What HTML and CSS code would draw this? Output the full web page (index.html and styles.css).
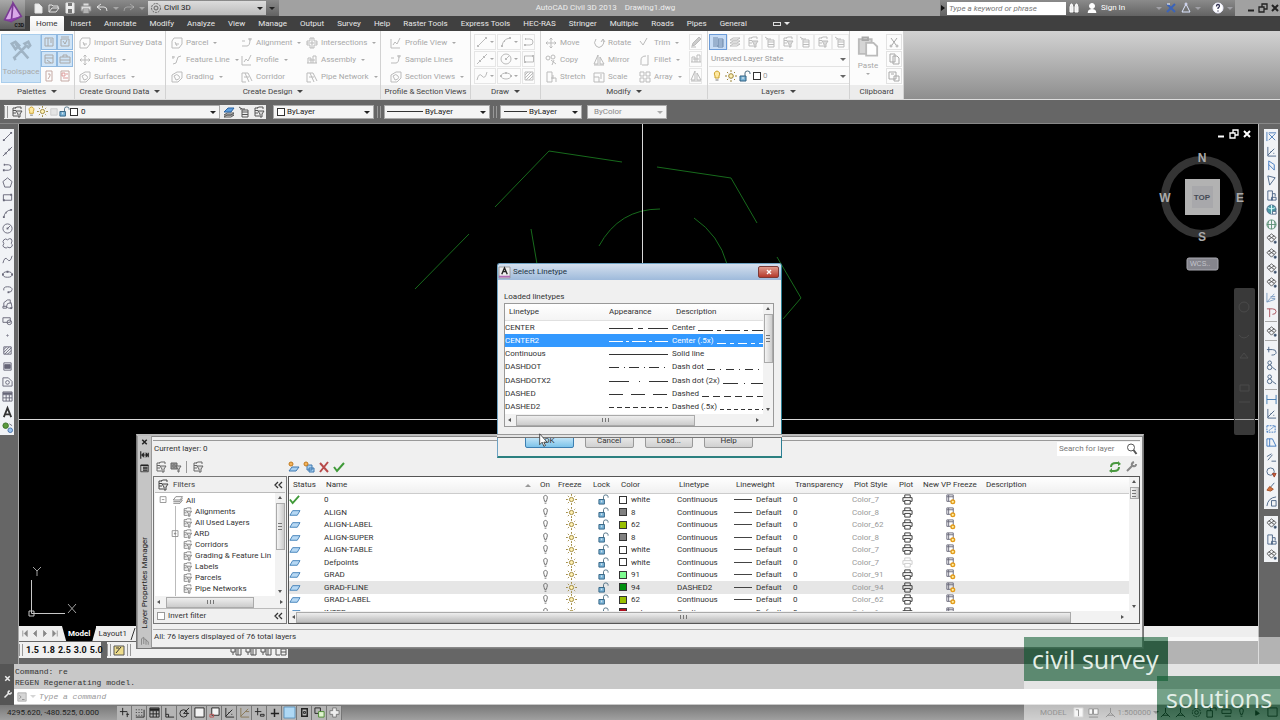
FILE: index.html
```html
<!DOCTYPE html>
<html lang="en">
<head>
<meta charset="utf-8">
<title>AutoCAD Civil 3D 2013 - Drawing1.dwg</title>
<link rel="stylesheet" href="styles.css">
</head>
<body>
<div class="app">
  <header class="titlebar">
    <div class="quick">
      <div class="quick-tools" data-tools="new open save print undo"></div>
      <i class="caret dim"></i><button class="tool redo" aria-label="redo"><i data-icon="redo"></i></button><i class="caret dim"></i>
      <label class="combo workspace-combo"><i data-icon="gear"></i><select aria-label="Workspace"><option>Civil 3D</option></select></label>
      <i class="caret"></i>
    </div>
    <div class="doc-title"><span>AutoCAD Civil 3D 2013</span><span>Drawing1.dwg</span></div>
    <div class="info">
      <i class="play"></i>
      <input class="keyword" type="text" aria-label="Search help" placeholder="Type a keyword or phrase">
      <button class="tool" aria-label="find"><i data-icon="binoc"></i></button>
      <button class="signin"><i data-icon="person"></i>Sign In</button>
      <div class="info-tools"><i class="caret dim"></i><button class="tool" aria-label="exchange"><i data-icon="exchange"></i></button><button class="tool" aria-label="connect"><i data-icon="tri"></i></button><i class="caret dim"></i><button class="tool help" aria-label="help"><i data-icon="help"></i></button><i class="caret dim"></i></div>
    </div>
    <div class="win-tools" data-tools="min restore close"></div>
  </header>
  <button class="app-menu" aria-label="Application menu"><i data-icon="logo"></i><span>C3D</span></button>

  <nav class="tabs">
    <button class="tab on">Home</button><button class="tab">Insert</button><button class="tab">Annotate</button><button class="tab">Modify</button><button class="tab">Analyze</button><button class="tab">View</button><button class="tab">Manage</button><button class="tab">Output</button><button class="tab">Survey</button><button class="tab">Help</button><button class="tab">Raster Tools</button><button class="tab">Express Tools</button><button class="tab">HEC-RAS</button><button class="tab">Stringer</button><button class="tab">Multiple</button><button class="tab">Roads</button><button class="tab">Pipes</button><button class="tab">General</button>
    <button class="tab ribbon-toggle" aria-label="Ribbon display"><i class="pill"></i><i class="caret"></i></button>
  </nav>

  <section class="ribbon">
    <div class="panel p-palettes">
      <div class="body">
        <button class="toolspace"><i data-icon="tools"></i><span>Toolspace</span></button>
        <div class="grid2 blue" data-tools="panel panel2 panel3 case doc book"></div>
      </div>
      <h2>Palettes <i class="caret"></i></h2>
    </div>
    <div class="panel p-ground">
      <div class="body cmds">
        <button class="cmd"><i data-icon="survey"></i>Import Survey Data</button>
        <button class="cmd"><i data-icon="move"></i>Points <i class="caret"></i></button>
        <button class="cmd"><i data-icon="surface"></i>Surfaces <i class="caret"></i></button>
      </div>
      <h2>Create Ground Data <i class="caret"></i></h2>
    </div>
    <div class="panel p-design">
      <div class="body cmds">
        <button class="cmd"><i data-icon="survey"></i>Parcel <i class="caret"></i></button>
        <button class="cmd"><i data-icon="feature"></i>Feature Line <i class="caret"></i></button>
        <button class="cmd"><i data-icon="surface"></i>Grading <i class="caret"></i></button>
        <button class="cmd"><i data-icon="align"></i>Alignment <i class="caret"></i></button>
        <button class="cmd"><i data-icon="profile"></i>Profile <i class="caret"></i></button>
        <button class="cmd"><i data-icon="corridor"></i>Corridor</button>
        <button class="cmd"><i data-icon="cross"></i>Intersections <i class="caret"></i></button>
        <button class="cmd"><i data-icon="assembly"></i>Assembly <i class="caret"></i></button>
        <button class="cmd"><i data-icon="corridor"></i>Pipe Network <i class="caret"></i></button>
      </div>
      <h2>Create Design <i class="caret"></i></h2>
    </div>
    <div class="panel p-profile">
      <div class="body cmds">
        <button class="cmd"><i data-icon="profile"></i>Profile View <i class="caret"></i></button>
        <button class="cmd"><i data-icon="align"></i>Sample Lines</button>
        <button class="cmd"><i data-icon="surface"></i>Section Views <i class="caret"></i></button>
      </div>
      <h2>Profile &amp; Section Views</h2>
    </div>
    <div class="panel p-draw">
      <div class="body draw-grid">
        <button class="split" aria-label="line"><i data-icon="line"></i><i class="caret"></i></button><button class="split" aria-label="arc"><i data-icon="arc"></i><i class="caret"></i></button><button class="split" aria-label="polyline"><i data-icon="pline"></i></button>
        <button class="split" aria-label="points"><i data-icon="xline"></i><i class="caret"></i></button><button class="split" aria-label="circle"><i data-icon="circle"></i><i class="caret"></i></button><button class="split" aria-label="rectangle"><i data-icon="rect"></i></button>
        <button class="split" aria-label="curve"><i data-icon="spline"></i><i class="caret"></i></button><button class="split" aria-label="ellipse"><i data-icon="ellipse"></i><i class="caret"></i></button><button class="split" aria-label="hatch"><i data-icon="hatch"></i></button>
      </div>
      <h2>Draw <i class="caret"></i></h2>
    </div>
    <div class="panel p-modify">
      <div class="body cmds">
        <button class="cmd"><i data-icon="move"></i>Move</button>
        <button class="cmd"><i data-icon="copy2"></i>Copy</button>
        <button class="cmd"><i data-icon="stretch"></i>Stretch</button>
        <button class="cmd"><i data-icon="rotate"></i>Rotate</button>
        <button class="cmd"><i data-icon="mirror"></i>Mirror</button>
        <button class="cmd"><i data-icon="scale"></i>Scale</button>
        <button class="cmd"><i data-icon="trim"></i>Trim <i class="caret"></i></button>
        <button class="cmd"><i data-icon="fillet"></i>Fillet <i class="caret"></i></button>
        <button class="cmd"><i data-icon="array"></i>Array <i class="caret"></i></button>
        <button class="split" aria-label="erase"><i data-icon="pencil"></i></button>
        <button class="split" aria-label="explode"><i data-icon="assembly"></i></button>
        <button class="split" aria-label="offset"><i data-icon="mirror"></i></button>
      </div>
      <h2>Modify <i class="caret"></i></h2>
    </div>
    <div class="panel p-layers">
      <div class="body stack">
        <div class="layer-tools" data-tools="layers stackic layfilter laystate layfilter laystate layfilter laystate"></div>
        <label class="combo"><select aria-label="Layer state"><option>Unsaved Layer State</option></select></label>
        <label class="combo"><i data-icon="bulb-y"></i><i data-icon="sun"></i><i data-icon="lock"></i><i class="swatch"></i><select aria-label="Layer"><option>0</option></select></label>
      </div>
      <h2>Layers <i class="caret"></i></h2>
    </div>
    <div class="panel p-clip">
      <div class="body">
        <button class="paste"><i data-icon="paste"></i><span>Paste</span><i class="caret"></i></button>
        <div class="clip-col" data-tools="cut copy pastespec"></div>
      </div>
      <h2>Clipboard</h2>
    </div>
    <div class="ribbon-rest"></div>
  </section>

  <section class="propbar">
    <div class="strip">
      <i class="grip"></i>
      <div data-tools="layfilter"></div>
      <label class="combo c-layer"><i data-icon="bulb-y"></i><i data-icon="sun"></i><i data-icon="freeze"></i><i data-icon="lock"></i><i class="swatch"></i><select aria-label="Current layer"><option>0</option></select></label>
      <div data-tools="stackblue laystate layfilter"></div>
    </div>
    <label class="combo c-color"><i class="swatch"></i><select aria-label="Color"><option>ByLayer</option></select></label>
    <i class="grip"></i>
    <label class="combo c-type"><i class="rule"></i><select aria-label="Linetype"><option>ByLayer</option></select></label>
    <i class="grip"></i>
    <label class="combo c-weight"><i class="rule"></i><select aria-label="Lineweight"><option>ByLayer</option></select></label>
    <label class="combo c-plot"><select aria-label="Plot style" disabled><option>ByColor</option></select></label>
  </section>

  <main class="workspace">
    <aside class="side left"><div class="bar" data-tools="line xline pline polygon rect arc circle cloud spline ellipse earc insert block point hatch gradient region table text addsel"></div></aside>
    <div class="center">
      <div class="canvas">
        <svg class="drawing" viewBox="19 124 1239 502" preserveAspectRatio="xMinYMin slice">
          <g stroke="#176a1c" fill="none">
            <path d="M415 289L469 234M495 207L549 151L622 162M657 167L731 178L757 223M777 257L801 298L783 319M531 229L537 264"/>
            <path d="M599 246Q619 209 660 209M694 218Q719 235 727 264"/>
          </g>
          <path d="M642.500 124V264M19 419.500H1258" stroke="#d8d8d8"/>
          <path d="M31.500 580V613.500H65M29 611h5v5h-5z" stroke="#c8c8c8" fill="none"/>
          <path d="M33 567l4 4l4-4M37 571v5M68 604l8 9M76 604l-8 9" stroke="#a0a0a0" fill="none"/>
          <circle cx="1202" cy="197" r="37" stroke="#343434" stroke-width="8" fill="none"/>
          <rect x="1185" y="179" width="35" height="36" fill="#b2b2b2"/><rect x="1192" y="186" width="21" height="22" fill="#a8a8ab"/>
          <g class="cube"><text x="1202" y="162">N</text><text x="1240" y="202">E</text><text x="1202" y="241">S</text><text x="1165" y="202">W</text><text class="top" x="1202" y="200">TOP</text></g>
          <rect x="1187" y="258" width="31" height="12" rx="2" fill="#85858d" stroke="#a9a9b1"/><text class="wcs" x="1190" y="266">WCS..</text>
          <rect x="1234" y="288" width="21" height="147" rx="2" fill="#393939"/>
          <g stroke="#4a4a4a" fill="none"><circle cx="1244" cy="307" r="5"/><path d="M1239 335q5 6 10 0M1240 358l4-5 4 5zM1240 385h9v6h-9zM1239 402h11"/></g>
          <path d="M1235 419.500h19" stroke="#aaa"/>
        </svg>
        <div class="view-tools" data-tools="min restore close"></div>
      </div>
      <div class="sheets">
        <div class="sheet-nav"><i data-icon="first"></i><i data-icon="prev"></i><i data-icon="next"></i><i data-icon="last"></i></div>
        <button class="sheet on">Model</button><button class="sheet">Layout1</button><i data-icon="slash"></i>
      </div>
      <div class="lower-tools">
        <div class="scales"><i class="grip"></i><button>1.5</button><button>1.8</button><button>2.5</button><button>3.0</button><button>5.0</button></div>
        <div class="note"><i class="grip"></i><button class="tool" aria-label="note"><i data-icon="note"></i></button><i class="grip"></i></div>
        <div class="rest" data-tools="clipa clipa clipa clipb"></div>
      </div>
    </div>
    <aside class="side right">
      <div class="bar" data-tools="snapx angle flag vee page globe globe2 gem gem gem gem fan tee - gem - undo2 node node - dims angle dimbox dimbox2 dimline ball brush arcbox"></div>
      <div class="bar small" data-tools="gem page gem"></div>
    </aside>
  </main>

  <section class="command">
    <div class="cmd-side"><i data-icon="close"></i><i data-icon="wrench"></i></div>
    <div class="cmd-main">
      <pre>Command: re
REGEN Regenerating model.</pre>
      <div class="cmd-line"><i data-icon="prompt"></i><i class="caret dim"></i><input type="text" aria-label="Command" placeholder="Type a command"></div>
    </div>
  </section>

  <footer class="status">
    <span class="coords">4295.620, -480.525, 0.000</span>
    <div class="status-tools" data-tools="addp snap table ortho polar sqw osnap angle otrack dyn plus sqb qp sel addw"></div>
    <div class="status-right"><button>MODEL</button><div data-tools="page1 twowin"></div><button class="scale-btn"><i data-icon="tri2"></i>1:500000 <i class="caret"></i></button></div>
    <div class="status-end" data-tools="tri2 tri2 gear lockd winbar bulb playd sqd"></div>
  </footer>

  <section class="palette" aria-label="Layer Properties Manager">
    <div class="pal-side"><i data-icon="close"></i><i data-icon="pin"></i><i data-icon="menu"></i><span>Layer Properties Manager</span><i data-icon="hand"></i></div>
    <div class="pal-main">
      <div class="pal-head"><span>Current layer: 0</span><label class="search"><input type="text" aria-label="Search for layer" placeholder="Search for layer"><i data-icon="search"></i></label></div>
      <div class="pal-tools">
        <div class="pal-left"><div data-tools="layfilter grpfilter"></div><i class="vsep"></i><div data-tools="layfilter"></div></div>
        <div class="pal-mid" data-tools="newlay newvp del check"></div>
        <div class="pal-right" data-tools="refresh wrench"></div>
      </div>
      <div class="pal-body">
        <div class="filters">
          <div class="filters-head"><i data-icon="layfilter"></i><span>Filters</span><i data-icon="chev"></i></div>
          <div class="tree-wrap">
            <ul class="tree">
              <li class="root"><i data-icon="minusbox"></i><i data-icon="sheets"></i>All</li>
              <li><i data-icon="layfilter"></i>Alignments</li><li><i data-icon="layfilter"></i>All Used Layers</li><li class="more"><i data-icon="plusbox"></i><i data-icon="layfilter"></i>ARD</li><li><i data-icon="layfilter"></i>Corridors</li><li><i data-icon="layfilter"></i>Grading &amp; Feature Lin</li><li><i data-icon="layfilter"></i>Labels</li><li><i data-icon="layfilter"></i>Parcels</li><li><i data-icon="layfilter"></i>Pipe Networks</li>
            </ul>
            <div class="vscroll tree-v"><i class="up"></i><b></b><i class="down"></i></div>
          </div>
          <div class="hscroll tree-h"><i class="lt"></i><b></b><i class="rt"></i></div>
          <label class="invert"><input type="checkbox">Invert filter<i data-icon="chev"></i></label>
        </div>
        <div class="layers">
          <div class="layers-top">
            <div class="table-clip">
              <table class="layer-table">
                <colgroup><col class="w-status"><col class="w-name"><col class="w-on"><col class="w-freeze"><col class="w-lock"><col class="w-color"><col class="w-type"><col class="w-weight"><col class="w-trans"><col class="w-style"><col class="w-plot"><col class="w-vp"><col></colgroup>
                <thead><tr><th>Status</th><th class="sorted">Name</th><th>On</th><th>Freeze</th><th>Lock</th><th>Color</th><th>Linetype</th><th>Lineweight</th><th>Transparency</th><th>Plot Style</th><th>Plot</th><th>New VP Freeze</th><th>Description</th></tr></thead>
                <tbody id="layer-rows"></tbody>
              </table>
            </div>
            <div class="vscroll layers-v"><i class="up"></i><b></b><i class="down"></i></div>
          </div>
          <div class="hscroll layers-h"><i class="lt"></i><b></b><i class="rt"></i></div>
        </div>
      </div>
      <div class="pal-foot">All: 76 layers displayed of 76 total layers</div>
    </div>
  </section>

  <section class="dialog" role="dialog" aria-label="Select Linetype">
    <div class="dlg-title"><i data-icon="dlg"></i><span>Select Linetype</span><button class="dlg-close" aria-label="Close"><i data-icon="close"></i></button></div>
    <div class="dlg-body">
      <p>Loaded linetypes</p>
      <div class="list">
        <div class="list-top">
          <table>
            <colgroup><col class="w-lt"><col class="w-ap"><col></colgroup>
            <thead><tr><th>Linetype</th><th>Appearance</th><th>Description</th></tr></thead>
            <tbody id="linetype-rows"></tbody>
          </table>
          <div class="vscroll list-v"><i class="up"></i><b></b><i class="down"></i></div>
        </div>
        <div class="hscroll list-h"><i class="lt"></i><b></b><i class="rt"></i></div>
      </div>
      <div class="dlg-buttons"><button class="ok">OK</button><button>Cancel</button><button>Load...</button><button>Help</button></div>
    </div>
    <i class="seam"></i>
    <i class="cursor" data-icon="cursor"></i>
  </section>

  <div class="brand"><div class="b1">civil survey</div><div class="b2"></div><div class="b3"></div><div class="b4">solutions</div></div>
</div>
<script src="app.js"></script>
</body>
</html>
```

FILE: styles.css
```css
* { box-sizing: border-box; }
body { margin: 0; font: 8px/12px Roboto, "Liberation Sans", sans-serif; color: #333; }
button, input, select { font: inherit; color: inherit; border: 0; background: none; padding: 0; margin: 0; }
h2, p, pre, ul { margin: 0; padding: 0; font-weight: 400; }
i, b { font-style: normal; flex: none; }
table { border-collapse: collapse; table-layout: fixed; width: 100%; }
th, td { padding: 0; font-weight: 400; text-align: left; white-space: nowrap; overflow: hidden; }
[data-icon] { display: inline-flex; }
.ic { display: block; width: 12px; height: 12px; fill: none; stroke: currentColor; stroke-width: 1; overflow: visible; }
[data-tools] { display: flex; align-items: center; }
.tool { display: flex; align-items: center; justify-content: center; }
.caret { display: inline-block; border: 3px solid transparent; border-top-color: currentColor; border-bottom: 0; }
.caret.dim { opacity: .35; }
.swatch { width: 8px; height: 8px; border: 1px solid #333; background: #fff; }
.grip { width: 4px; height: 12px; border-left: 1px solid #999; border-right: 1px solid #999; }
.rule { width: 38px; height: 1px; background: #333; }

.app { position: relative; display: flex; flex-direction: column; height: 100vh; overflow: hidden; background: #666; }

.titlebar { display: flex; height: 16px; background: #a1a1a1; color: #fff; align-items: center; }
.quick { display: flex; align-items: center; gap: 3px; height: 16px; padding: 0 4px 0 30px; background: linear-gradient(#8b8b8b, #636363); }
.quick-tools .tool { width: 16px; }
.quick-tools, .redo { color: #e2e2e2; }
.redo { width: 14px; }
.quick > .caret:last-child { color: #222; }
.combo { display: flex; align-items: center; gap: 2px; height: 14px; background: #f4f4f4; position: relative; color: #222; min-width: 0; }
.combo::after { content: ""; position: absolute; right: 3px; top: 6px; border: 3px solid transparent; border-top-color: #222; border-bottom: 0; }
.combo select { appearance: none; flex: 1; min-width: 0; height: 14px; outline: 0; }
.workspace-combo { width: 118px; background: linear-gradient(#dcdcdc, #bbb); padding-left: 2px; }
.workspace-combo .ic { color: #666; }
.doc-title { flex: 1; display: flex; justify-content: center; gap: 8px; padding-right: 8px; color: #eee; }
.info { display: flex; align-items: center; height: 16px; width: 295px; background: linear-gradient(#8b8b8b, #636363); gap: 2px; }
.play { border: 3px solid transparent; border-left: 4px solid #111; border-right: 0; margin-left: 1px; }
.keyword { width: 119px; height: 13px; background: #fff; padding: 0 2px; color: #555; font-style: italic; }
.keyword::placeholder, .search input::placeholder { color: #777; opacity: 1; }
.signin { display: flex; align-items: center; gap: 3px; margin-left: 4px; }
.info-tools { flex: 1; display: flex; align-items: center; justify-content: flex-end; gap: 3px; padding-right: 2px; color: #eef; }
.help { margin-left: 8px; }
.win-tools { width: 45px; padding-left: 10px; color: #222; }
.app-menu { position: absolute; left: 0; top: 0; width: 25px; height: 29px; background: linear-gradient(#a9a9a9, #5d5d5d); }
.app-menu .ic { width: 20px; height: 24px; }
.app-menu span { position: absolute; right: 1px; bottom: 0; font: bold 5px/7px Roboto, sans-serif; color: #111; }

.tabs { display: flex; gap: 1px; height: 15px; padding-left: 30px; background: #404040; }
.tab { padding: 0 6px; height: 15px; color: #e8e8e8; white-space: nowrap; }
.tab.on { background: linear-gradient(#fff, #eee); color: #333; border-radius: 1px 1px 0 0; }
.ribbon-toggle { display: flex; align-items: center; gap: 3px; margin-left: 13px; }
.pill { width: 8px; height: 4px; border: 1px solid #ddd; }

.ribbon { display: flex; height: 69px; border-bottom: 1px solid #ddd; color: #a8a8a8; }
.panel { flex: none; display: flex; flex-direction: column; background: #fcfcfc; border-right: 1px solid #d2d2d2; }
.panel h2 { font-size: 8px; line-height: 13px; height: 14px; background: #ececec; color: #444; text-align: center; white-space: nowrap; }
.panel h2 .caret { margin: 0 0 1px 3px; }
.panel .body { flex: 1; display: flex; padding-top: 3px; }
.cmds.body { display: grid; grid-auto-flow: column; grid-template-rows: repeat(3, 17px); align-content: start; }
.cmd { display: flex; align-items: center; gap: 3px; white-space: nowrap; text-align: left; }
.cmd .ic, .split .ic { color: #bbb; }
.cmd .caret { border-width: 2px; border-bottom: 0; margin-left: 2px; }
.p-palettes { width: 75px; } .p-ground { width: 91px; } .p-design { width: 215px; } .p-profile { width: 90px; }
.p-draw { width: 70px; } .p-modify { width: 167px; } .p-layers { width: 142px; } .p-clip { width: 54px; }
.p-ground .body { padding-left: 4px; }
.p-design .body { padding-left: 5px; grid-template-columns: 70px 65px 75px; }
.p-profile .body { padding-left: 9px; }
.p-modify .body { padding-left: 4px; grid-template-columns: 48px 46px 50px 14px; }
.toolspace { width: 40px; height: 49px; margin-left: 1px; background: #c9e1f5; border: 1px solid #a9cdec; }
.toolspace .ic { width: 22px; height: 22px; color: #9fb3c4; }
.grid2.blue { width: 33px; display: grid; grid-template-columns: 16px 16px; grid-auto-rows: 17px; align-items: start; }
.blue .tool { height: 16px; background: #cfe4f7; border: 1px solid #8fb8e0; }
.blue .tool:nth-child(n+5) { background: none; border: 0; color: #c4a9a4; }
.draw-grid.body { display: grid; grid-template-columns: 23px 25px 14px; grid-auto-rows: 17px; padding-left: 3px; align-content: start; }
.split { display: flex; align-items: center; justify-content: center; gap: 2px; border: 1px solid #e6e6e6; height: 16px; margin-right: 1px; }
.split .caret { border-width: 2px; border-bottom: 0; }
.stack.body { flex-direction: column; gap: 2px; padding: 3px 0 0 1px; }
.layer-tools .tool { flex: 1; height: 16px; border: 1px solid #eaeaea; color: #bbb; }
.layer-tools .tool:first-child { background: #c7dcf5; border-color: #6b9bd8; color: #6d87a8; }
.p-layers .combo { background: #fcfcfc; height: 15px; border-bottom: 1px solid #e3e3e3; color: #999; padding-left: 2px; }
.p-layers .combo::after { border-top-color: #666; }
.paste { width: 36px; display: flex; flex-direction: column; align-items: center; gap: 1px; }
.paste .ic { width: 22px; height: 25px; }
.paste .caret { border-width: 2px; border-bottom: 0; }
.clip-col { flex-direction: column; gap: 1px; }
.clip-col .tool { width: 16px; height: 16px; border: 1px solid #e2e2e2; }
.ribbon-rest { flex: 1; background: linear-gradient(#d2d2d2, #8e8e8e); }

.propbar { display: flex; align-items: center; gap: 3px; height: 24px; padding: 0 4px; border-bottom: 1px solid #888; }
.propbar .combo { border: 1px solid #aaa; height: 14px; }
.propbar .combo select { height: 12px; }
.propbar .combo::after { top: 5px; }
.strip { display: flex; align-items: center; gap: 1px; background: #eee; height: 14px; width: 262px; margin-right: 4px; color: #555; }
.strip .tool { width: 15px; }
.strip .c-layer { flex: 1; gap: 0; }
.c-layer .ic { width: 11px; height: 11px; }
.c-layer select { padding-left: 3px; }
.c-color { width: 101px; padding-left: 3px; }
.c-type { width: 106px; padding-left: 2px; } .c-type .rule { width: 36px; }
.c-weight { width: 82px; padding-left: 3px; } .c-weight .rule { width: 23px; }
.c-plot { width: 80px; padding-left: 6px; margin-left: 2px; }
.c-plot select { color: #888; opacity: 1; }
.c-plot::after { opacity: .35; }

.workspace { flex: 1; display: flex; min-height: 0; }
.side { flex: none; }
.side.left { width: 19px; padding-top: 5px; border-right: 1px solid #aaa; }
.side.right { width: 22px; padding: 5px 3px 0 5px; border-left: 1px solid #bbb; }
.side .bar { flex-direction: column; justify-content: space-between; background: #f1f3f6; width: 14px; height: 306px; padding: 2px 0; color: #667; }
.side.right .bar { height: 380px; color: #4a6585; }
.side.right .small { height: 46px; margin-top: 7px; }
.side .ic { width: 11px; height: 11px; }
.tsep { width: 12px; height: 1px; background: #aaa; }
.center { flex: 1; display: flex; flex-direction: column; min-width: 0; }
.canvas { position: relative; flex: 1; background: #000; min-height: 0; overflow: hidden; }
.drawing { position: absolute; left: 0; top: 0; width: 100%; height: 100%; }
.cube text { font: bold 12px "Liberation Sans", sans-serif; fill: #aaa; text-anchor: middle; }
.cube .top { font-size: 8px; fill: #444a55; }
.wcs { font: 7px "Liberation Sans", sans-serif; fill: #c4c4cc; }
.view-tools { position: absolute; right: 5px; top: 4px; color: #fff; }
.view-tools .tool { width: 13px; }
.sheets { display: flex; align-items: center; height: 15px; background: #eee; padding-left: 1px; color: #333; }
.sheet-nav { display: flex; align-items: center; width: 42px; color: #888; }
.sheet-nav .ic { width: 10px; height: 9px; }
.sheet { height: 15px; padding: 0 2px; }
.sheet.on { padding: 0 6px; background: #000; color: #fff; font-weight: 700; clip-path: polygon(0 0, 100% 0, 88% 100%, 12% 100%); }
.lower-tools { display: flex; height: 17px; margin-bottom: 6px; background: #666; padding-top: 1px; }
.scales { display: flex; align-items: center; gap: 3px; background: #f0f0f0; width: 82px; }
.scales button { font: bold 9px/14px Roboto, "Liberation Sans", sans-serif; color: #111; }
.note { display: flex; align-items: center; gap: 2px; background: #f0f0f0; margin-left: 6px; }
.rest { width: 157px; background: #f0f0f0; justify-content: flex-end; color: #555; }
.rest .tool { width: 15px; }

.command { display: flex; height: 41px; }
.cmd-side { width: 14px; background: #555; color: #eee; display: flex; flex-direction: column; align-items: center; gap: 5px; padding-top: 9px; }
.cmd-side .ic { width: 9px; height: 11px; }
.cmd-main { flex: 1; background: #c8c8c8; }
.cmd-main pre { font: 8px/11px "Liberation Mono", monospace; height: 25px; padding: 2px 0 0 1px; color: #333; }
.cmd-line { display: flex; align-items: center; gap: 3px; height: 15px; background: #fff; padding-left: 3px; color: #888; }
.cmd-line .ic { width: 10px; height: 10px; }
.cmd-line input { flex: 1; font: italic 8px "Liberation Mono", monospace; }
.cmd-line input::placeholder { color: #999; opacity: 1; }

.status { display: flex; align-items: center; height: 15px; background: linear-gradient(#787878, #a0a0a0); color: #222; }
.coords { width: 117px; padding-left: 7px; }
.status-tools .tool { width: 15px; height: 14px; border-right: 1px solid #777; background: #b5b5b5; }
.status-tools .ic, .status-right .ic, .status-end .ic { width: 11px; height: 11px; }
.status-right { display: flex; align-items: center; gap: 4px; margin-left: auto; width: 118px; color: #222; }
.status-right .tool { width: 15px; }
.scale-btn { display: flex; align-items: center; gap: 2px; }
.status-end { width: 122px; justify-content: space-around; color: #111; }

.palette { position: absolute; left: 136px; top: 434px; width: 1008px; height: 215px; display: flex; background: #f0f0f0; border: 1px solid #777; border-top: 2px solid #bbb; box-shadow: inset 0 0 0 1px #888; }
.pal-side { width: 15px; background: #c5c5c5; display: flex; flex-direction: column; align-items: center; gap: 3px; color: #222; border-left: 1px solid #999; border-right: 1px solid #999; padding-top: 1px; }
.pal-side .ic { width: 9px; height: 10px; }
.pal-side span { margin: auto 0 4px; writing-mode: vertical-rl; transform: rotate(180deg); white-space: nowrap; }
.pal-side [data-icon="hand"] { margin-bottom: 2px; color: #777; }
.pal-main { flex: 1; min-width: 0; margin: 4px 3px 0 1px; border-top: 1px solid #999; }
.pal-head { display: flex; justify-content: space-between; align-items: center; height: 16px; padding-left: 1px; }
.search { display: flex; align-items: center; background: #fff; width: 83px; height: 14px; padding: 0 2px; }
.search input { flex: 1; min-width: 0; }
.pal-tools { display: flex; align-items: center; height: 19px; }
.pal-left { display: flex; gap: 3px; width: 133px; color: #666; }
.pal-left .tool { width: 15px; }
.vsep { width: 1px; height: 12px; background: #999; }
.pal-mid .tool { width: 15px; }
.pal-right { margin-left: auto; padding-right: 3px; gap: 4px; color: #888; }
.pal-body { display: flex; gap: 1px; height: 148px; }
.filters { width: 134px; border: 1px solid #777; display: flex; flex-direction: column; }
.filters-head { display: flex; align-items: center; gap: 4px; height: 15px; padding: 0 2px 0 3px; color: #444; }
.filters-head span { flex: 1; }
.tree-wrap { display: flex; flex: 1; min-height: 0; background: #fff; border-top: 1px solid #bbb; margin: 0 1px; overflow: hidden; }
.tree { flex: 1; min-width: 0; list-style: none; padding-top: 1px; background: linear-gradient(#bbb, #bbb) 20px 13px / 1px 100px no-repeat; }
.tree li { display: flex; align-items: center; gap: 2px; height: 11px; line-height: 11px; padding-left: 27px; white-space: nowrap; color: #333; }
.tree li .ic { width: 11px; height: 10px; color: #777; }
.tree li.root { padding-left: 3px; gap: 3px; height: 12px; }
.tree li.more { padding-left: 15px; gap: 1px; }
.vscroll, .hscroll { flex: none; display: flex; align-items: center; background: #f2f2f2; color: #444; }
.vscroll { flex-direction: column; width: 10px; padding: 3px 0; }
.hscroll { height: 12px; padding: 0 3px; }
.vscroll b, .hscroll b { border: 1px solid #aaa; background: linear-gradient(#eee, #ccc); display: flex; align-items: center; justify-content: center; }
.vscroll b { width: 9px; background: linear-gradient(90deg, #f4f4f4, #ccc); }
.hscroll b { height: 11px; }
.hscroll b::after { content: ""; width: 5px; height: 4px; border: 1px solid #777; border-width: 0 1px; background: linear-gradient(#777, #777) center / 1px 4px no-repeat; }
.vscroll b::after { content: ""; height: 5px; width: 4px; border: 1px solid #777; border-width: 1px 0; background: linear-gradient(#777, #777) center / 4px 1px no-repeat; }
.up, .down, .lt, .rt { border: 2px solid transparent; }
.up { border-bottom: 3px solid #555; border-top: 0; }
.down { border-top: 3px solid #555; border-bottom: 0; margin-top: auto; }
.lt { border-right: 3px solid #555; border-left: 0; }
.rt { border-left: 3px solid #555; border-right: 0; margin-left: auto; }
.tree-v b { height: 47px; margin-top: 4px; }
.tree-h b { width: 88px; margin-left: 6px; }
.invert { display: flex; align-items: center; gap: 3px; height: 15px; padding: 0 2px 0 3px; border-top: 1px solid #bbb; }
.invert input { appearance: none; width: 8px; height: 8px; border: 1px solid #999; background: #fff; }
.invert i { margin-left: auto; }
.layers { flex: 1; min-width: 0; border: 1px solid #555; background: #fff; display: flex; flex-direction: column; }
.layers-top { flex: 1; display: flex; min-height: 0; }
.table-clip { flex: 1; min-width: 0; overflow: hidden; }
.layer-table th { height: 16px; padding-left: 4px; background: linear-gradient(#fff, #f0f0f0); border-bottom: 1px solid #ccc; color: #333; }
.layer-table td { height: 12px; line-height: 12px; padding-left: 2px; color: #333; }
.layer-table tr:nth-child(even) td { height: 13px; line-height: 13px; }
.layer-table td .ic { width: 11px; height: 11px; display: inline-block; vertical-align: middle; color: #666; }
.layer-table td.c { padding: 0; text-align: center; }
.layer-table td:first-child { padding: 0; }
.layer-table td.style { color: #999; }
.layer-table tr.sel td { background: #e6e6e6; }
.cell { display: flex; align-items: center; gap: 4px; }
.weight-line { width: 18px; height: 1px; background: #444; }
.sorted { position: relative; }
.sorted::after { content: ""; position: absolute; right: 5px; top: 7px; border: 3px solid transparent; border-bottom-color: #999; border-top: 0; }
.w-status { width: 33px; } .w-name { width: 214px; } .w-on { width: 18px; } .w-freeze { width: 35px; } .w-lock { width: 28px; } .w-color { width: 58px; } .w-type { width: 57px; } .w-weight { width: 59px; } .w-trans { width: 59px; } .w-style { width: 45px; } .w-plot { width: 24px; } .w-vp { width: 63px; }
.layers-v b { height: 12px; margin-top: 4px; }
.layers-h b { width: 775px; margin-left: 1px; background: linear-gradient(#eee, #bbb); }
.layers-h { padding-right: 15px; }
.pal-foot { margin-top: 5px; border-top: 1px solid #aaa; padding: 1px 1px 0; }

.dialog { position: absolute; left: 497px; top: 263px; width: 285px; height: 195px; background: #f0f0f0; border: 1px solid #6fa3c4; border-bottom: 2px solid #2b8080; border-right-color: #2b7f95; border-radius: 3px 3px 0 0; color: #333; }
.dlg-title { display: flex; align-items: center; gap: 3px; height: 16px; padding: 0 2px 0 1px; background: linear-gradient(#d5e0ee, #9ebadb); border-radius: 3px 3px 0 0; }
.dlg-title > [data-icon] .ic { width: 11px; height: 11px; }
.dlg-title span { flex: 1; color: #234; }
.dlg-close { width: 21px; height: 12px; display: flex; align-items: center; justify-content: center; background: linear-gradient(#df9a8c, #b53a2c); border: 1px solid #7c3a36; color: #fff; border-radius: 2px; }
.dlg-close .ic { width: 8px; height: 8px; }
.dlg-body { padding: 10px 7px 0 6px; }
.dlg-body p { line-height: 13px; }
.list { border: 1px solid #999; background: #fff; height: 124px; display: flex; flex-direction: column; }
.list-top { flex: 1; display: flex; min-height: 0; }
.list-top table { flex: 1; width: 0; align-self: flex-start; }
.list th { height: 16px; padding-left: 4px; background: linear-gradient(#fff, #f4f4f4); border-bottom: 1px solid #e0e0e0; }
.list td { height: 13px; line-height: 13px; }
.list tr:nth-child(4n) td { height: 14px; }
.list tr.sel td { background: #3399ff; color: #fff; }
.list th:nth-child(2) { padding-left: 0; }
.list svg { display: block; width: 60px; height: 5px; overflow: visible; }
.w-lt { width: 104px; } .w-ap { width: 63px; }
.desc { display: flex; align-items: flex-end; gap: 3px; }
.list .desc svg { flex: 1; width: 0; height: 5px; overflow: hidden; }
.list-v b { height: 49px; margin-top: 4px; }
.list-h b { width: 179px; margin-left: 5px; }
.list-h { padding-right: 14px; }
.dlg-buttons { display: flex; gap: 11px; padding: 7px 21px 0; }
.dlg-buttons button { width: 49px; height: 14px; border: 1px solid #999; border-radius: 2px; background: linear-gradient(#eee, #d0d0d0); }
.dlg-buttons .ok { background: linear-gradient(#d7effb, #7dc3ea); border-color: #3c7fb1; }
.seam { position: absolute; left: -1px; right: -1px; top: 170px; height: 4px; background: #e4e4e4; border-top: 1px solid #999; border-bottom: 1px solid #777; }
.cursor { position: absolute; left: 40px; top: 169px; }
.cursor .ic { width: 10px; height: 15px; }

.brand { position: absolute; right: 0; top: 637px; width: 256px; height: 83px; display: grid; grid-template-columns: 133px 11px 112px; grid-template-rows: 39px 5px 39px; font: 25px/44px "Open Sans", "Noto Sans", sans-serif; color: #e4efe8; }
.b1, .b4 { background: rgba(0, 83, 37, .54); white-space: nowrap; }
.b1 { grid-area: 1 / 1 / 3 / 3; padding-left: 8px; }
.b2 { grid-area: 1 / 3; background: rgba(255, 255, 255, .5); }
.b3 { grid-area: 3 / 1; background: rgba(255, 255, 255, .5); }
.b4 { grid-area: 2 / 2 / 4 / 4; padding-left: 9px; }
```

FILE: app.js
```js
const ICONS = {
  new: '<path d="M3 2h4l3 3v6H3z" fill="#eee"/>',
  open: '<path d="M1 10V3h3l1 1h5v2M1 10l3-4h7l-3 4z"/>',
  save: '<path d="M2 1h8v10H2z" fill="#eee"/><path d="M4 1h4v3H4zM4 7h4v4H4z" fill="#777" stroke="none"/>',
  print: '<path d="M3 4V1h6v3M1 4h10v5H1zM3 7h6v4H3z" fill="#ddd" stroke="#888"/>',
  undo: '<path d="M1 5h7q3 0 3 4M5 2L1 5l4 3"/>',
  redo: '<path d="M11 5H4Q1 5 1 9M7 2l4 3-4 3" opacity=".4"/>',
  gear: '<circle cx="6" cy="6" r="4.500" stroke-dasharray="2 1"/><circle cx="6" cy="6" r="2"/>',
  binoc: '<path d="M2 10V5l1-3h1l1 3v5zM7 10V5l1-3h1l1 3v5z" fill="#eee"/>',
  person: '<circle cx="6" cy="4" r="2.500" fill="#fff"/><path d="M2 10.500q0-3 4-3t4 3z" fill="#fff"/>',
  exchange: '<path d="M2 2l4 4-4 4M10 2L6 6l4 4" stroke="#3b63b8" stroke-width="2"/><path d="M2 2h3" stroke="#fff"/>',
  tri: '<path d="M6 2l4 8H2z" stroke="#dde6ff"/><circle cx="6" cy="2" r="1" fill="#4465b5"/>',
  help: '<circle cx="6" cy="6" r="5" fill="#fff"/><path d="M4.500 4.500q0-2 1.500-2t1.500 1.500q0 1-1.500 2v1M6 8.500v1" stroke="#335" stroke-width="1.300"/>',
  min: '<path d="M3 8.500h6" stroke-width="2"/>',
  restore: '<path d="M2 5h5v5H2zM5 5V2h5v5H7" stroke-width="1.300"/>',
  close: '<path d="M3 3l6 6M9 3L3 9" stroke-width="2"/>',
  logo: '<path d="M6 0L1 10l4 1zM6 0l5 8-6 3z" fill="#d9a8e8" stroke="#7a3c94"/><path d="M2 10l9-2-6 3z" fill="#8b3eaa" stroke="none"/>',
  tools: '<path d="M2 10l7-7M3 2l7 8M1 2l2-1 2 2-2 2zM8 2l2-1 1 2-1 1zM2 9l1 2" stroke-width="1.400"/>',
  panel: '<path d="M2 2h8v8H2zM5 2v8M7 4h2M7 6h2"/>',
  panel2: '<path d="M2 3h8v7H2zM4 5l2 3 2-4M2 1h8"/>',
  panel3: '<path d="M2 2h8v8H2zM2 5h8M4 7l4 3"/>',
  case: '<path d="M1 4h10v6H1zM4 4V2h4v2M1 7h10"/>',
  doc: '<path d="M3 1h6v10H3zM5 4h2v2L5 9"/>',
  book: '<path d="M2 1h8v10H2z"/><path d="M3 3h3v3H3zM7 4h2M4 8h5" stroke="#d99"/>',
  survey: '<path d="M3 1h8v6l-3 4H1V4zM4 7h4M4 5l2 4"/>',
  move: '<path d="M6 1v10M1 6h10M4.500 2.500L6 1l1.500 1.500M4.500 9.500L6 11l1.500-1.500M2.500 4.500L1 6l1.500 1.500M9.500 4.500L11 6 9.500 7.500"/>',
  surface: '<path d="M1 4l5-3h5v6l-4 4H1zM3 5q3-3 5 0t-3 4z"/>',
  feature: '<path d="M2 10q4 0 4-4t4-4M2 2v3M1 3h3"/>',
  align: '<path d="M1 9h5q3 0 3-7M1 4h3M9 1v3M7 2h4"/>',
  profile: '<path d="M1 2v9h9M3 8l2-3 2 2 3-6"/>',
  corridor: '<path d="M1 2h6l4 8M1 2v9h4M4 2l4 9M3 6h5"/>',
  cross: '<path d="M4 1v3H1v4h3v3h4V8h3V4H8V1zM6 1v10M1 6h10"/>',
  assembly: '<path d="M1 9h10M2 9V4h3v5M7 9V2h3v7M3 6h6"/>',
  line: '<path d="M2 10L10 2"/><path d="M1 10h2M9 2h2" stroke-width="2"/>',
  xline: '<path d="M1 11L11 1"/><path d="M3 8h2M7 4h2" stroke-width="2"/>',
  pline: '<path d="M2 3h5q3 0 3 3T7 9H3"/><path d="M1 9h2M2 3h1" stroke-width="2"/>',
  polygon: '<path d="M6 1l5 4-2 6H3L1 5z"/>',
  rect: '<path d="M1.500 3h9v6h-9z"/><path d="M1 9h2M9 3h2" stroke-width="2"/>',
  arc: '<path d="M2 10Q3 3 10 2"/><path d="M1 10h2M9 2h2M4 5h1" stroke-width="2"/>',
  circle: '<circle cx="6" cy="6" r="5"/><path d="M6 6l3-3"/><path d="M5 6h2" stroke-width="2"/>',
  cloud: '<path d="M6 2Q4 0 2 2q-2 2 0 4-2 3 0 4 3 2 4 0 3 2 5-1 1-2-1-3 2-3 0-5-2-1-4 1z"/>',
  spline: '<path d="M1 10Q3 2 6 6T11 2"/>',
  ellipse: '<ellipse cx="6" cy="6" rx="5" ry="3"/><path d="M0 6h2M10 6h2M5 3h2" stroke-width="2"/>',
  earc: '<path d="M2 7q-1-4 4-4t5 3-4 3"/><path d="M6 9h2" stroke-width="2"/>',
  insert: '<path d="M2 8V4l4-3h3v4M1 8h4v2H1zM5 8l1-3 4-1 1 6H7z"/><path d="M9 10h2" stroke-width="2"/>',
  block: '<path d="M1 3h8v5H1z"/><circle cx="8" cy="8" r="2.500"/>',
  point: '<circle cx="6" cy="6" r=".7"/>',
  hatch: '<path d="M2 2h8v8H2zM2 5l3-3M2 8l6-6M3 10l7-7M6 10l4-4"/>',
  gradient: '<path d="M2 2h8v8H2z"/><path d="M3 4h6v4H3z" fill="currentColor"/>',
  region: '<path d="M1 2h6l4 4v5H1z"/><circle cx="6" cy="7" r="2"/>',
  table: '<path d="M1 1h10v10H1zM1 4h10M1 7.500h10M4.500 4v7M8 4v7"/><path d="M1 2.500h10" stroke-width="2"/>',
  text: '<path d="M2 11L6 1l4 10M3.500 8h5" stroke="#333" stroke-width="2"/>',
  addsel: '<circle cx="4" cy="4" r="3" fill="#5b9a3c" stroke="#38702a"/><circle cx="9" cy="9" r="2.500" fill="#9bc3ee" stroke="#4671a8"/><path d="M8 2l3 2"/>',
  copy2: '<circle cx="3" cy="4" r="2"/><circle cx="8" cy="3" r="2"/><path d="M6 6l5 4M9 6l-2 5"/>',
  stretch: '<path d="M2 1h5v10H2zM6 7h5v4M8 4v4"/>',
  rotate: '<path d="M3 2q-3 4 0 7t6 0 1-6M8 5l2-3 2 3"/>',
  mirror: '<path d="M5 1v9H1zM7 3v7h4zM1 11h10"/>',
  scale: '<path d="M1 2h10v9H1zM1 6h5v5M8 3v5"/>',
  trim: '<path d="M1 4l3 4 4-7"/>',
  fillet: '<path d="M2 11V6q0-4 5-4M9 1v10H3"/>',
  array: '<path d="M1 1h4v4H1zM7 1h4v4H7zM1 7h4v4H1zM7 7h4v4H7z"/>',
  pencil: '<path d="M2 10l1-3 6-6 2 2-6 6z" fill="#ccc"/><path d="M1 11h5"/>',
  layers: '<path d="M1 2h5M1 4h4M1 6h4M1 8h4M1 10h5M6 3h5v8H6zM6 5h5M6 7h5M6 9h5"/>',
  stackic: '<path d="M1 4l3-2h7L8 4zM1 7l3-2h7L8 7zM1 10l3-2h7l-3 2z"/>',
  stackblue: '<path d="M1 9l3-2h7L8 9zM1 11l3-2h7l-3 2z"/><path d="M1 6l4-4h6L8 6z" fill="#5c9fe0" stroke="#2b62a0"/>',
  layfilter: '<path d="M5 2H2v8h4M2 4.500h3M2 7h3M4 2L6 1h4v2"/><path d="M5 5h6L9 8v3H7V8z" fill="#ddd"/>',
  grpfilter: '<path d="M1 2h6v6H1z" fill="#999"/><path d="M3 4h2v2H3zM6 5h5L9 8v3H8V8z" fill="#ddd"/>',
  laystate: '<path d="M1 1l3 2M4 4h6v7H4zM4 6h6M4 8.500h6M2 3h5"/>',
  'bulb-y': '<path d="M6 1Q2 2 4 6v2h4V6q2-4-2-5z" fill="#ffe9a0" stroke="#c9a02c"/><path d="M4.500 10h3" stroke="#777"/>',
  bulb: '<path d="M6 1.500Q3 2 4.500 6l.5 2h2l.5-2Q9 2 6 1.500zM5 10h2"/>',
  sun: '<circle cx="6" cy="6" r="2.300" fill="#fff1b5" stroke="#9b8438"/><path d="M6 0v2M6 10v2M0 6h2M10 6h2M2 2l1.200 1.200M9 9l1 1M2 10l1.200-1.200M9 3l1-1" stroke="#9b8438"/>',
  freeze: '<path d="M3 3h7v7H3z" stroke="#ccc" fill="#e5e5e5"/>',
  lock: '<path d="M1 6h6v5H1z" fill="#79b4d8" stroke="#2f5f80"/><path d="M6 6V3q0-2 2.500-2T11 3v1" stroke="#4b6d82"/><path d="M4 7v2" stroke="#eee"/>',
  paste: '<path d="M1 2h7v8H1z" fill="#d5d5d5" stroke="#bbb"/><path d="M3 1h3v1.500H3z"/><path d="M5 4h4l2 2v5H5z" fill="#fff" stroke="#bbb"/>',
  cut: '<path d="M3 2l5 7M9 2L4 9"/><circle cx="3" cy="10" r="1"/><circle cx="9" cy="10" r="1"/>',
  copy: '<path d="M2 1h5v8H2zM5 3h4l2 2v6H5z"/>',
  pastespec: '<path d="M1 2h7v7H1zM3 4h3M6 6h5v5H6z"/>',
  first: '<path d="M3 2v8"/><path d="M9 2v8L5 6z" fill="currentColor"/>',
  prev: '<path d="M8 2v8L4 6z" fill="currentColor"/>',
  next: '<path d="M4 2v8l4-4z" fill="currentColor"/>',
  last: '<path d="M9 2v8"/><path d="M3 2v8l4-4z" fill="currentColor"/>',
  slash: '<path d="M2 12L6 0"/>',
  note: '<path d="M1 2h10v9H1z" fill="#eedc8a" stroke="#555"/><path d="M3 9l5-6M3 4h3" stroke="#333"/>',
  clipa: '<path d="M1 4h4v4H1zM3 8v3M6 3h5v8H6zM8 3v8"/>',
  clipb: '<path d="M3 2H1v9h4M6 5h5v6H6zM6 8h5M7 3h4"/>',
  snapx: '<path d="M1 1v10M3 2h8M3 3l7 7M10 3L3 10" stroke="#477ab8"/>',
  angle: '<path d="M2 1v10h9M2 10L9 3M5 6h1M8 8h1"/>',
  flag: '<path d="M3 1v10M3 1l6 4v6L3 5" stroke="#3f78c0"/>',
  vee: '<path d="M2 1l2 10 6-8M2 1l8 2"/>',
  page: '<path d="M2 1h5v10H2zM7 4h3v3M6 8h5v3H6z"/>',
  globe: '<circle cx="6" cy="6" r="5" fill="#4c9aa5"/><path d="M2 4q4 3 8 0M6 1v10" stroke="#dff"/><path d="M7 8h4v3H7z" fill="#fff"/>',
  globe2: '<circle cx="6" cy="6" r="5" stroke="#5d9276"/><path d="M6 1v10M1 6h10M3 2q-2 4 0 8M9 2q2 4 0 8" stroke="#5d9276"/>',
  gem: '<path d="M6 1l5 4-5 5-5-5zM3 3l6 4M9 3L3 7" stroke="#555"/><path d="M9 9h2v2H9z" fill="#333"/>',
  fan: '<path d="M1 1v10l9-3M1 11l8-9M5 5h5M6 7h4" stroke="#7d9dc0"/>',
  tee: '<path d="M1 2h6M4 2v9M7 2q4 0 4 3T7 8" stroke="#a8505a"/>',
  undo2: '<path d="M1 5h6q4 0 4 3t-5 3M3 2v6"/>',
  node: '<circle cx="4" cy="3" r="2"/><circle cx="4" cy="8" r="2.500"/><path d="M7 8l4 3"/>',
  dims: '<path d="M1 1v10M11 1v10M1 6h10" stroke="#3f78b0"/>',
  dimbox: '<path d="M1 3h9v7H1zM1 10l9-7" stroke="#3f78c0" stroke-dasharray="2 1"/>',
  dimbox2: '<path d="M1 2h6l4 8H1zM4 2v8" stroke="#3f78c0"/>',
  dimline: '<path d="M1 5l5-3M2 9l5-6M6 10h5"/>',
  ball: '<circle cx="5" cy="5" r="4"/><path d="M7 7h4l-2 4z" fill="#c8643c" stroke="#a0402a"/>',
  brush: '<path d="M3 9l6-7"/><path d="M1 10l3-4 4 3-3 2z" fill="#d5713c" stroke="#a0502a"/>',
  arcbox: '<path d="M1 11Q2 2 11 1M6 5h5v6H6z"/>',
  wrench: '<path d="M2 10l6-6M7 5q-1-3 2-4M8 5q3 1 3-2" stroke-width="2"/>',
  prompt: '<path d="M1 1h10v10H1z" fill="#d5d5d5" stroke="#aaa"/><path d="M3 4l2 2-2 2M6 9h3"/>',
  addp: '<path d="M4 1v8M1 5h8M8 8h3M9 6v5"/>',
  snap: '<path d="M2 3h8M2 6h8M2 9h8" stroke-dasharray="1 2"/><path d="M2 11h9V3"/>',
  ortho: '<path d="M2 1v10h9M2 8h3v3"/>',
  polar: '<circle cx="5" cy="7" r="4"/><path d="M5 7l6-6M5 7h6"/>',
  sqw: '<path d="M1 1h10v10H1z" fill="#f3f3f3"/>',
  osnap: '<path d="M3 1h8v8H3z" fill="#f3f3f3"/><path d="M1 8h4v3H1z" stroke="#b55"/>',
  otrack: '<path d="M2 1v10h9M2 10l8-8M7 5h4" stroke="#875"/>',
  dyn: '<path d="M4 1v8M1 5h7M7 8h4v2H7z"/>',
  plus: '<path d="M6 2v9M2 7h9" stroke-width="1.600"/>',
  sqb: '<path d="M0 0h12v12H0z" fill="#aed8f4" stroke="#5a93bd"/>',
  qp: '<path d="M3 2h6v8H3z" stroke-width="1.600"/><path d="M5 5h2v2H5z"/>',
  sel: '<path d="M1 1h6v6H1z"/><path d="M5 5h6v6H5z" fill="#dff3cf" stroke="#4a8a30"/>',
  addw: '<path d="M4 1h4v3h3v4H8v3H4V8H1V4h3z" fill="#eee" stroke="#777"/>',
  page1: '<path d="M1 1h10v10H1z" fill="#eee" stroke="#aaa"/><path d="M6 3v7M3 3h3"/>',
  twowin: '<path d="M1 2h4v6H1zM6 2h5v6H6zM1 11h10" fill="#eee"/>',
  tri2: '<path d="M6 1v5L1 11M6 6l5 5M3 9h6"/>',
  lockd: '<path d="M1 4h6v7H1zM5 4V1h6v3"/>',
  winbar: '<path d="M1 3h10v4H1zM4 10h7"/>',
  playd: '<path d="M4 4v5l4-2z" fill="currentColor"/>',
  sqd: '<path d="M1 1h10v9H1z"/>',
  pin: '<path d="M1 1v10M11 3v6" stroke-width="1.500"/><path d="M3 6h6M5 3L2 6l3 3zM8 3l3 3-3 3z" fill="currentColor"/>',
  menu: '<path d="M1 2h10v9H1z"/><path d="M1 2.500h10M4 5h6M4 7h6M4 9h6" stroke-width="1.500"/>',
  hand: '<path d="M2 11V3l3-2v9M5 3l3 1v7M8 5l3 2v4"/>',
  search: '<circle cx="5" cy="4.500" r="3.500" stroke="#555"/><path d="M7.500 7l3 4" stroke="#555" stroke-width="2"/>',
  newlay: '<path d="M1 10l3-4h7l-3 4z" fill="#a8cff0" stroke="#3f78b0"/><circle cx="3" cy="3" r="2" fill="#f3b25a" stroke="#c07a20"/>',
  newvp: '<path d="M4 4h5v5H4zM6 7h5v4H6z" fill="#a8cff0" stroke="#3f78b0"/><circle cx="3" cy="3" r="2" fill="#f3b25a" stroke="#c07a20"/>',
  del: '<path d="M2 2l8 9M10 1L2 11" stroke="#b84a4a" stroke-width="2"/>',
  check: '<path d="M1 6l3 4 7-8" stroke="#3f9a38" stroke-width="2"/>',
  refresh: '<path d="M2 6q0-4 5-4h3M10 6q0 4-5 4H2" stroke="#4a9840" stroke-width="2"/><path d="M9 0v5l3-2zM3 7v5l-3-2z" fill="#4a9840" stroke="none"/>',
  chev: '<path d="M6 3L3 6l3 3M10 3L7 6l3 3" stroke="#333" stroke-width="1.300"/>',
  minusbox: '<path d="M2 2h7v7H2zM4 5.500h3" stroke="#888"/>',
  plusbox: '<path d="M2 2h7v7H2zM4 5.500h3M5.500 4v3" stroke="#888"/>',
  sheets: '<path d="M1 6l3-4h8L9 6zM1 8h8l3-4M1 10h8l3-4"/>',
  sheet: '<path d="M1 9l3-5h8L9 9z" fill="#b6d8f4" stroke="#3f7fb8"/>',
  printer: '<path d="M3 4V1h6v3M3 8H1V4h10v4H9M3 7h6v4H3z" stroke="#333"/>',
  printoff: '<path d="M3 4V1h6v3M3 8H1V4h10v4H9M3 7h6v4H3z" stroke="#ccc"/>',
  vp: '<path d="M2 1h7v7H2zM2 3h7M4 1v7" stroke="#667"/><circle cx="8.500" cy="8.500" r="2" fill="#fff0a0" stroke="#e39b1c" stroke-width="1.500"/>',
  dlg: '<path d="M0 0h12v12H0z" fill="#eee" stroke="#999"/><path d="M3 8l3-7 3 7M4 5h4" stroke="#222" stroke-width="1.500"/><path d="M0 10.500h12" stroke="#b06ab5" stroke-width="2"/>',
  cursor: '<path d="M2-2v13l3-3 2 5 2-1-2-4h4z" fill="#fff" stroke="#333"/>'
};

const icon = name => `<svg class="ic" viewBox="0 0 12 12" aria-hidden="true">${ICONS[name]}</svg>`;

const LAYERS = [
  ['0', '#fff', 'white', 'Continuous', 'Color_7'],
  ['ALIGN', '#808080', '8', 'Continuous', 'Color_8'],
  ['ALIGN-LABEL', '#99bf00', '62', 'Continuous', 'Color_62'],
  ['ALIGN-SUPER', '#808080', '8', 'Continuous', 'Color_8'],
  ['ALIGN-TABLE', '#fff', 'white', 'Continuous', 'Color_7'],
  ['Defpoints', '#fff', 'white', 'Continuous', 'Color_7'],
  ['GRAD', '#7dfb90', '91', 'Continuous', 'Color_91'],
  ['GRAD-FLINE', '#009010', '94', 'DASHED2', 'Color_94'],
  ['GRAD-LABEL', '#99bf00', '62', 'Continuous', 'Color_62'],
  ['INTER', '#b01020', 'red', 'Continuous', 'Color_1']
];

document.getElementById('layer-rows').innerHTML = LAYERS.map(([name, hex, color, type, style], n) => `
  <tr class="${name === 'GRAD-FLINE' ? 'sel' : ''}">
    <td>${icon(n ? 'sheet' : 'check')}</td><td>${name}</td>
    <td class="c">${icon('bulb')}</td><td class="c">${icon('sun')}</td><td class="c">${icon('lock')}</td>
    <td><span class="cell"><i class="swatch" style="background:${hex}"></i>${color}</span></td>
    <td>${type}</td><td><span class="cell"><i class="weight-line"></i>Default</span></td><td>0</td>
    <td class="style">${style}</td><td class="c">${icon(name === 'Defpoints' ? 'printoff' : 'printer')}</td>
    <td class="c">${icon('vp')}</td><td></td>
  </tr>`).join('');

const LINETYPES = [
  ['CENTER', 'Center', '24 5 5 5', '15 4 4 4'],
  ['CENTER2', 'Center (.5x)', '14 3 3 3', '9 4 4 4'],
  ['Continuous', 'Solid line', '', null],
  ['DASHDOT', 'Dash dot', '10 5 1 4', '8 5 1 5'],
  ['DASHDOTX2', 'Dash dot (2x)', '20 10 1 9', '15 6 1 6'],
  ['DASHED', 'Dashed', '14 8', '7 4'],
  ['DASHED2', 'Dashed (.5x)', '5 3', '4 3']
];

document.getElementById('linetype-rows').innerHTML = LINETYPES.map(([name, text, dash, tail]) => `
  <tr class="${name === 'CENTER2' ? 'sel' : ''}">
    <td>${name}</td>
    <td><svg><path d="M0 3.500H59" stroke="currentColor" stroke-dasharray="${dash}"/></svg></td>
    <td><span class="desc">${text}${tail ? `<svg><path d="M0 1.500H90" stroke="currentColor" stroke-dasharray="${tail}"/></svg>` : ''}</span></td>
  </tr>`).join('');

document.querySelectorAll('[data-tools]').forEach(bar => {
  bar.innerHTML = bar.dataset.tools.split(' ').map(name => name === '-'
    ? '<i class="tsep"></i>'
    : `<button class="tool" aria-label="${name}">${icon(name)}</button>`).join('');
});

document.querySelectorAll('[data-icon]').forEach(el => { el.innerHTML = icon(el.dataset.icon); });
```
